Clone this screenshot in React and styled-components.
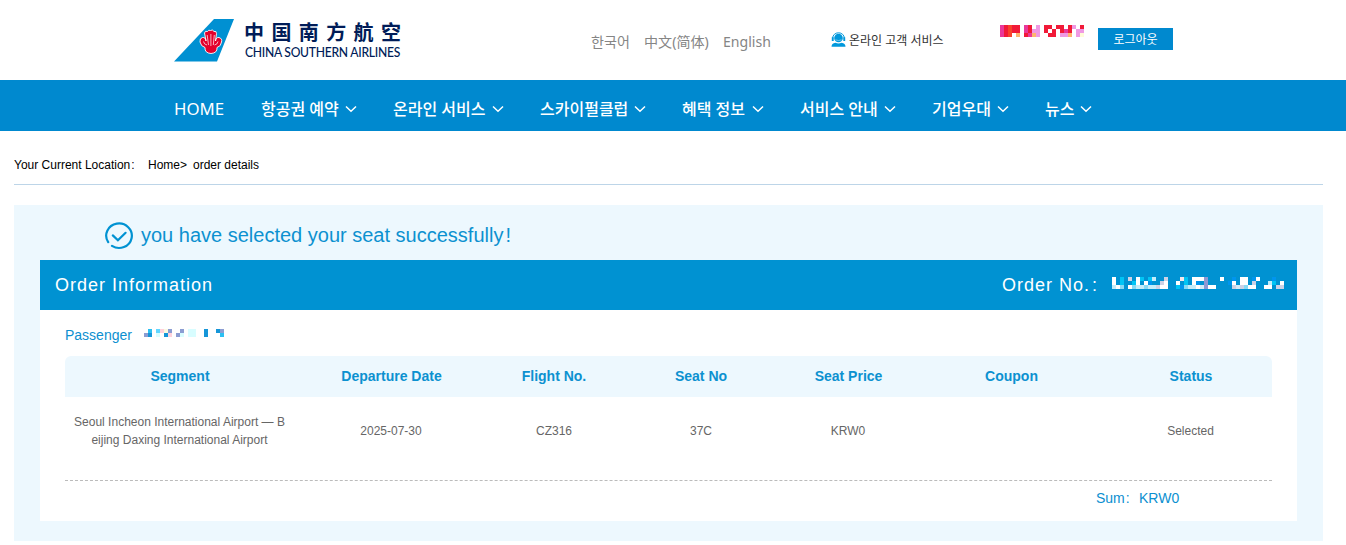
import React from 'react'
import styled, { createGlobalStyle } from 'styled-components'

const menus = [
  { label: '항공권 예약', width: 79 },
  { label: '온라인 서비스', width: 94 },
  { label: '스카이펄클럽', width: 89 },
  { label: '혜택 정보', width: 65 },
  { label: '서비스 안내', width: 79 },
  { label: '기업우대', width: 60 },
  { label: '뉴스', width: 30 },
]

const columns = ['Segment', 'Departure Date', 'Flight No.', 'Seat No', 'Seat Price', 'Coupon', 'Status']

// masked values, one letter per 4px block
const userMask = {
  rows: ['mrorr.mr.l.rrwrrwrlwr', 'mrorr.mrpl.rwrwrmrwpl', 'mrowg.rmgl.wrrwlpgwly'],
  colors: { m: '#e9389a', r: '#f11a38', o: '#f8432c', l: '#ef99e3', p: '#ef99e3', g: '#ffb46e', y: '#fffbd8' },
}
const orderMask = {
  rows: [
    'w.c.g.wc.cs..g...pc.wwwv...w..b.ww.bw...b..',
    'w.c..cw.wb..gw..w.c.wb.v.....bw.ww.g...sc.w',
    'swi.wississgww..cbisswlvww....glgiww..ww.gg',
  ],
  colors: { w: '#ffffff', c: '#00c4f5', g: '#cdd2e6', s: '#c4ecfa', p: '#f5e6ea', v: '#8f98d3', b: '#0095ee', i: '#87d9f4', l: '#d5ecf8' },
}
const passengerMask = {
  rows: ['.c.spyv..v.ll..b..bv', 'vb.l.bp.vl.ll..b...c'],
  colors: { c: '#2bc0f2', s: '#62d6ff', p: '#ffd2dc', y: '#fbfae0', v: '#8b9dd2', l: '#d8fdff', b: '#1696d8' },
}

function Mask({ data }) {
  const cols = data.rows[0].length
  return (
    <MaskSvg $cols={cols} width={cols * 4} height={data.rows.length * 4} shapeRendering='crispEdges'>
      {data.rows.map((row, y) =>
        row.split('').map((c, x) =>
          data.colors[c] ? (
            <rect key={x + '-' + y} x={x * 4} y={y * 4} width='4' height='4' fill={data.colors[c]} />
          ) : null
        )
      )}
    </MaskSvg>
  )
}

function TailMark() {
  return (
    <svg width='61' height='45' viewBox='0 0 61 45'>
      <path d='M0 43.5 L40 1 H60 L43 43.5 Z' fill='#0090d2' />
      <path
        d='M32 23 L30.5 15 Q31 12.5 33.5 13.5 Q34.5 11.5 36.5 12.5 Q38.5 11 40 13.5 Q42.5 12.5 42.5 15.5 L41.5 23 Q42 19 45 19.5 Q48.5 20.5 47.5 24 Q47 28.5 43 29.5 Q43.5 35 37 35.5 Q30.5 35 31 29.5 Q27 28.5 26 24 Q25.5 20 28.5 19.5 Q31.5 19 32 23 Z'
        fill='#e4002b' stroke='#fff' strokeWidth='0.9'
      />
      <path d='M33.2 17 L34.5 27 M36.9 16 V28 M40.3 17 L39.3 27 M29.5 23.5 Q30 26.5 33 27 M44 23.5 Q43.5 26.5 40.5 27' fill='none' stroke='#fff' strokeWidth='0.7' />
    </svg>
  )
}

function Chevron() {
  return (
    <svg width='12' height='8' viewBox='0 0 12 8'>
      <path d='M1 1.5 L6 6.3 L11 1.5' fill='none' stroke='#fff' strokeWidth='1.5' />
    </svg>
  )
}

function App() {
  return (
    <>
      <GlobalStyle />
      <Header>
        <LogoLink>
          <TailMark />
          <LogoText>
            <LogoCn>中国南方航空</LogoCn>
            <LogoEn>CHINA SOUTHERN AIRLINES</LogoEn>
          </LogoText>
        </LogoLink>
        <Languages>
          <Language $width={53}>한국어</Language>
          <Language $width={79} $cn>中文(简体)</Language>
          <Language $width={48}>English</Language>
        </Languages>
        <Service>
          <svg width='15' height='16' viewBox='0 0 15 16'>
            <circle cx='7.5' cy='6' r='4.3' fill='#0098dc' />
            <path d='M1.7 7 V6 A5.8 5.2 0 0 1 13.3 6 V7' fill='none' stroke='#0098dc' strokeWidth='1' />
            <path d='M0.8 5.2 H2.7 V9 H0.8 Z M12.3 5.2 H14.2 V9 H12.3 Z M0.5 14.8 Q0.5 11.2 4.5 10.8 Q7.5 12.4 10.5 10.8 Q14.5 11.2 14.5 14.8 Z' fill='#0098dc' />
            <path d='M4.5 7.8 Q7.5 9.3 10.5 7.8' fill='none' stroke='#9bd8f2' strokeWidth='0.7' />
          </svg>
          <span>온라인 고객 서비스</span>
        </Service>
        <UserName><Mask data={userMask} /></UserName>
        <Logout>로그아웃</Logout>
      </Header>

      <Nav>
        <HomeLink>HOME</HomeLink>
        {menus.map((menu) => (
          <NavItem key={menu.label}>
            <NavText $width={menu.width}>{menu.label}</NavText>
            <Chevron />
          </NavItem>
        ))}
      </Nav>

      <Location>
        <LocationLabel>Your Current Location<Colon>:</Colon></LocationLabel>
        <LocationHome>Home&gt;</LocationHome>
        <span>order details</span>
      </Location>

      <Panel>
        <Success>
          <svg width='30' height='28' viewBox='0 0 30 28'>
            <path d='M3.2 20.2 A12.8 12.2 0 1 1 7 23.9' fill='none' stroke='#0092d2' strokeWidth='2.2' strokeLinecap='round' />
            <path d='M7.8 13.4 L12.9 18.2 L20.6 10.8' fill='none' stroke='#0092d2' strokeWidth='2.2' strokeLinecap='round' />
          </svg>
          <SuccessText>you have selected your seat successfully<Bang>!</Bang></SuccessText>
        </Success>
        <Card>
          <CardTitle>
            <span>Order Information</span>
            <OrderNo>
              <OrderLabel>Order No.<Bang>:</Bang></OrderLabel>
              <Mask data={orderMask} />
            </OrderNo>
          </CardTitle>
          <CardBody>
            <Passenger>
              <span>Passenger</span>
              <Mask data={passengerMask} />
            </Passenger>
            <TableHead>
              {columns.map((c) => <span key={c}>{c}</span>)}
            </TableHead>
            <TableRow>
              <span>Seoul Incheon International Airport — B<br />eijing Daxing International Airport</span>
              <span>2025-07-30</span>
              <span>CZ316</span>
              <span>37C</span>
              <span>KRW0</span>
              <span />
              <span>Selected</span>
            </TableRow>
            <Sum>
              <SumLabel>Sum<Colon>:</Colon></SumLabel>
              <span>KRW0</span>
            </Sum>
          </CardBody>
        </Card>
      </Panel>
    </>
  )
}

export default App

const GlobalStyle = createGlobalStyle`
  *{
    box-sizing:border-box;
  }
  body{
    margin:0;
    background:#fff;
    overflow:hidden;
    font-family:"Liberation Sans", Arial, sans-serif;
    font-size:12px;
    color:#000;
  }
  svg{
    display:block;
    flex:none;
  }
`

const MaskSvg = styled.svg`
  width:${props=>props.$cols * 4}px;
`

const Header = styled.header`
  height:80px;
  padding-left:174px;
  display:flex;
  align-items:flex-start;
  font-family:"Noto Sans", "Noto Sans CJK KR", sans-serif;
  white-space:nowrap;
`

const LogoLink = styled.a`
  display:flex;
  width:417px;
  padding-top:18px;
`

const LogoText = styled.div`
  display:flex;
  flex-direction:column;
  padding:1px 0 0 9px;
  color:#001c58;
`

const LogoCn = styled.span`
  font-family:"Noto Sans CJK SC", sans-serif;
  font-size:20px;
  font-weight:700;
  line-height:26px;
  letter-spacing:7.4px;
`

const LogoEn = styled.span`
  padding-left:1px;
  font-family:Lato, sans-serif;
  font-size:13.7px;
  font-weight:500;
  line-height:14px;
  letter-spacing:-0.3px;
  transform:scaleX(0.886);
  transform-origin:left;
`

const Languages = styled.div`
  display:flex;
  width:240px;
  padding-top:31px;
`

const Language = styled.a`
  width:${props=>props.$width}px;
  font-family:"Noto Sans", ${props=>props.$cn?'"Noto Sans CJK SC"':'"Noto Sans CJK KR"'}, sans-serif;
  font-size:14.1px;
  line-height:21px;
  color:#858585;
`

const Service = styled.div`
  display:flex;
  width:169px;
  padding-top:33px;
  gap:3px;
  font-size:12px;
  line-height:16px;
  color:#333;
  svg{
    margin-top:-1px;
  }
`

const UserName = styled.div`
  width:98px;
  padding-top:25px;
`

const Logout = styled.a`
  width:75px;
  height:22px;
  margin-top:28px;
  padding-top:1px;
  background:#0089cf;
  color:#fff;
  font-size:12px;
  line-height:22px;
  text-align:center;
`

const Nav = styled.nav`
  height:51px;
  padding-left:174px;
  padding-top:6px;
  background:#0089cf;
  color:#fff;
  display:flex;
  align-items:center;
  font-family:"Noto Sans", "Noto Sans CJK KR", sans-serif;
  white-space:nowrap;
`

const HomeLink = styled.a`
  width:87px;
  font-size:16.8px;
`

const NavItem = styled.a`
  display:flex;
  align-items:center;
  margin-right:36px;
`

const NavText = styled.span`
  width:${props=>props.$width + 5}px;
  font-size:16px;
  font-weight:500;
  line-height:22px;
`

const Location = styled.div`
  display:flex;
  height:54px;
  margin:0 23px 0 14px;
  padding-top:27px;
  line-height:14px;
  border-bottom:1px solid #bdd5e8;
`

const LocationLabel = styled.span`
  width:134px;
`

const LocationHome = styled.span`
  width:45px;
`

const Colon = styled.span`
  margin-left:1px;
`

const Bang = styled.span`
  margin-left:2px;
`

const Panel = styled.main`
  height:336px;
  margin:20px 23px 0 14px;
  padding:0 26px;
  background:#edf8fe;
`

const Success = styled.div`
  height:55px;
  padding:17px 0 0 65px;
  display:flex;
  align-items:flex-start;
  color:#0c91d0;
`

const SuccessText = styled.span`
  margin:1px 0 0 6px;
  font-size:20px;
  line-height:24px;
`

const Card = styled.section`
  height:261px;
  background:#fff;
`

const CardTitle = styled.div`
  height:50px;
  padding:0 13px 0 15px;
  display:flex;
  align-items:center;
  justify-content:space-between;
  background:#0092d2;
  color:#fff;
  font-size:18px;
  letter-spacing:1px;
`

const OrderNo = styled.div`
  display:flex;
  align-items:center;
  ${MaskSvg}{
    margin-bottom:4px;
  }
`

const OrderLabel = styled.span`
  width:110px;
`

const CardBody = styled.div`
  padding:0 25px;
`

const Passenger = styled.div`
  height:46px;
  padding-top:16px;
  display:flex;
  gap:12px;
  color:#0c8fd0;
  font-size:14px;
  line-height:18px;
  ${MaskSvg}{
    margin-top:3px;
  }
`

const TableHead = styled.div`
  display:grid;
  grid-template-columns:230px 193px 132px 162px 133px 193px 1fr;
  height:41px;
  line-height:41px;
  border-radius:6px 6px 0 0;
  background:#edf8fe;
  color:#0c91d0;
  font-size:14px;
  font-weight:700;
  text-align:center;
  span:last-child{
    padding-left:2px;
  }
`

const TableRow = styled.div`
  display:grid;
  grid-template-columns:229px 194px 132px 162px 132px 194px 1fr;
  align-items:center;
  height:84px;
  padding-bottom:15px;
  line-height:18px;
  border-bottom:1px dashed #bbb;
  color:#666;
  text-align:center;
  span:last-child{
    padding-left:1px;
  }
`

const Sum = styled.div`
  display:flex;
  padding:8px 0 0 1031px;
  color:#0c8fd0;
  font-size:14px;
  line-height:18px;
`

const SumLabel = styled.span`
  width:43px;
`
